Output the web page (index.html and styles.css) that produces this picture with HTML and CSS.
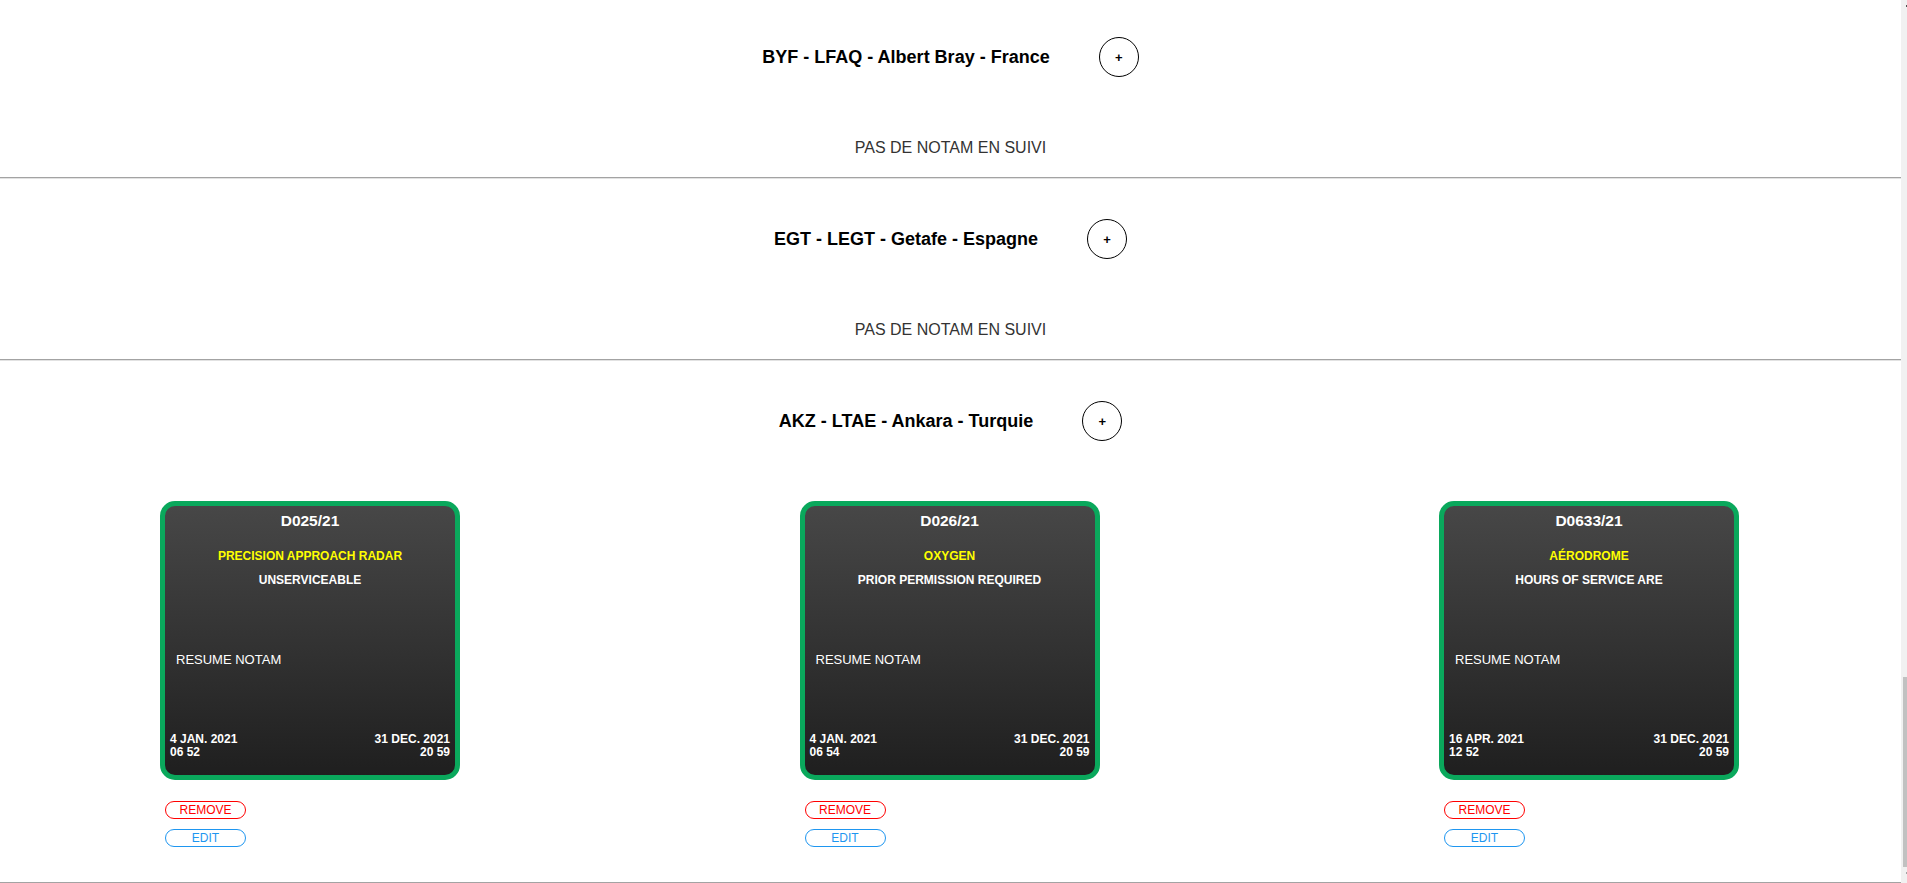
FILE: index.html
```html
<!DOCTYPE html>
<html lang="fr">
<head>
<meta charset="utf-8">
<title>NOTAM en suivi</title>
<link rel="stylesheet" href="styles.css">
</head>
<body>
<main class="page">
  <section class="airport airport-first">
    <div class="airport-head">
      <h3 class="airport-name">BYF - LFAQ - Albert Bray - France</h3>
      <button class="add-btn">+</button>
    </div>
    <p class="empty">PAS DE NOTAM EN SUIVI</p>
  </section>

  <section class="airport">
    <div class="airport-head">
      <h3 class="airport-name">EGT - LEGT - Getafe - Espagne</h3>
      <button class="add-btn">+</button>
    </div>
    <p class="empty">PAS DE NOTAM EN SUIVI</p>
  </section>

  <section class="airport airport-cards">
    <div class="airport-head">
      <h3 class="airport-name">AKZ - LTAE - Ankara - Turquie</h3>
      <button class="add-btn">+</button>
    </div>
    <div class="cards">
      <div class="card-col">
        <div class="card">
          <div class="card-id">D025/21</div>
          <div class="card-subject">PRECISION APPROACH RADAR</div>
          <div class="card-cond">UNSERVICEABLE</div>
          <div class="card-resume">RESUME NOTAM</div>
          <div class="card-dates">
            <div class="date">4 JAN. 2021<br>06 52</div>
            <div class="date date-end">31 DEC. 2021<br>20 59</div>
          </div>
        </div>
        <div class="actions">
          <button class="pill pill-remove">REMOVE</button>
          <button class="pill pill-edit">EDIT</button>
        </div>
      </div>
      <div class="card-col">
        <div class="card">
          <div class="card-id">D026/21</div>
          <div class="card-subject">OXYGEN</div>
          <div class="card-cond">PRIOR PERMISSION REQUIRED</div>
          <div class="card-resume">RESUME NOTAM</div>
          <div class="card-dates">
            <div class="date">4 JAN. 2021<br>06 54</div>
            <div class="date date-end">31 DEC. 2021<br>20 59</div>
          </div>
        </div>
        <div class="actions">
          <button class="pill pill-remove">REMOVE</button>
          <button class="pill pill-edit">EDIT</button>
        </div>
      </div>
      <div class="card-col">
        <div class="card">
          <div class="card-id">D0633/21</div>
          <div class="card-subject">AÉRODROME</div>
          <div class="card-cond">HOURS OF SERVICE ARE</div>
          <div class="card-resume">RESUME NOTAM</div>
          <div class="card-dates">
            <div class="date">16 APR. 2021<br>12 52</div>
            <div class="date date-end">31 DEC. 2021<br>20 59</div>
          </div>
        </div>
        <div class="actions">
          <button class="pill pill-remove">REMOVE</button>
          <button class="pill pill-edit">EDIT</button>
        </div>
      </div>
    </div>
  </section>
</main>
<div class="scrollbar"><div class="scroll-arrow scroll-arrow-top"></div><div class="scroll-thumb"></div><div class="scroll-arrow scroll-arrow-bottom"></div></div>
</body>
</html>
```

FILE: styles.css
```css
* { box-sizing: border-box; }

html, body {
  margin: 0;
  padding: 0;
  height: 883px;
  overflow: hidden;
  background: #fff;
  font-family: "Liberation Sans", Arial, sans-serif;
}

.page {
  width: calc(100% - 6px);
}

.airport {
  padding: 41px 0 19px;
  border-bottom: 1px solid #a3a3a3;
  box-shadow: 0 1px 0 #e2e2e2;
}

.airport-first {
  padding-top: 37px;
}

.airport-head {
  display: flex;
  justify-content: center;
  align-items: center;
  gap: 49px;
  height: 40px;
}

.airport-name {
  margin: 0;
  font-size: 18px;
  font-weight: bold;
  color: #000;
}

.add-btn {
  width: 40px;
  height: 40px;
  border: 1px solid #000;
  border-radius: 50%;
  background: #fff;
  color: #000;
  font-family: "Liberation Sans", Arial, sans-serif;
  font-size: 13px;
  font-weight: bold;
  padding: 0;
  display: flex;
  align-items: center;
  justify-content: center;
}

.empty {
  margin: 61px 0 0;
  text-align: center;
  font-size: 16px;
  line-height: 20px;
  color: #333;
}

.airport-cards {
  padding-bottom: 35px;
}

.cards {
  display: flex;
  gap: 339.5px;
  padding-left: 160px;
  margin-top: 60px;
}

.card-col {
  width: 300px;
}

.card {
  width: 300px;
  height: 279px;
  border: 5px solid #0aa85c;
  border-radius: 15px;
  background: linear-gradient(#474747, #1f1f1f);
  color: #fff;
  padding: 6px 5px 16px;
  display: flex;
  flex-direction: column;
  text-align: center;
}

.card-id {
  font-size: 15.5px;
  font-weight: bold;
  line-height: 17px;
}

.card-subject {
  margin-top: 20px;
  font-size: 12px;
  font-weight: bold;
  line-height: 14px;
  color: #ffff00;
}

.card-cond {
  margin-top: 10px;
  font-size: 12px;
  font-weight: bold;
  line-height: 14px;
}

.card-resume {
  margin-top: 65px;
  padding-left: 6px;
  text-align: left;
  font-size: 13px;
  line-height: 15px;
}

.card-dates {
  margin-top: auto;
  display: flex;
  justify-content: space-between;
  font-size: 12px;
  font-weight: bold;
  line-height: 13px;
  text-align: left;
}

.date-end {
  text-align: right;
}

.actions {
  display: flex;
  flex-direction: column;
  align-items: flex-start;
  gap: 10px;
  margin-top: 21px;
  padding-left: 5px;
}

.pill {
  width: 81px;
  height: 18px;
  border-radius: 9px;
  background: #fff;
  font-family: "Liberation Sans", Arial, sans-serif;
  font-size: 12px;
  line-height: 16px;
  padding: 0;
  text-align: center;
}

.pill-remove {
  border: 1px solid #ff0000;
  color: #ff0000;
}

.pill-edit {
  border: 1px solid #1e96f0;
  color: #1e96f0;
}

.scrollbar {
  position: fixed;
  top: 0;
  right: 0;
  width: 6px;
  height: 100%;
  background: #f1f1f1;
}

.scroll-thumb {
  position: absolute;
  left: 2px;
  top: 677px;
  width: 4px;
  height: 190px;
  background: #c1c1c1;
}

.scroll-arrow {
  position: absolute;
  left: 5px;
  width: 1px;
  height: 2px;
  background: #505050;
}

.scroll-arrow-top { top: 5px; }
.scroll-arrow-bottom { top: 872px; background: #a3a3a3; }
```
